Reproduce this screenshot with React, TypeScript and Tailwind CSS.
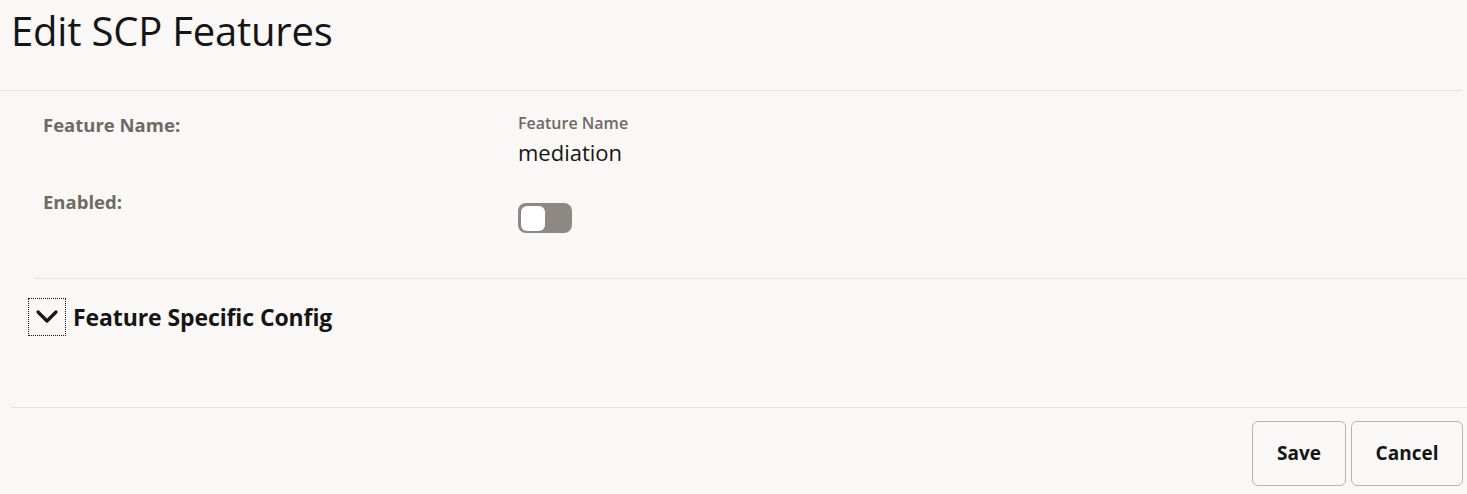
const font = { fontFamily: '"Open Sans", "Noto Sans", sans-serif' };

export default function App() {
  return (
    <div className="w-[1467px] h-[494px] bg-[#f9f8f6] text-[#161513] overflow-hidden" style={font}>
      {/* Header */}
      <div className="pr-[5px]">
        <div className="h-[91px] border-b border-[#e5e3e0] pl-[11px] pt-[4px]">
          <h1 className="text-[40px] leading-[54px] font-normal tracking-[-0.2px]">Edit SCP Features</h1>
        </div>
      </div>

      {/* Form */}
      <div className="pl-[34px]">
        <div className="border-b border-[#e5e3e0] h-[188px] pl-[9px] pt-[21px]">
          <div className="flex">
            <div className="w-[475px] text-[18.5px] leading-[26px] font-bold text-[#6f6964]">Feature Name:</div>
            <div>
              <div className="text-[16px] leading-[22px] font-semibold text-[#6f6964]">Feature Name</div>
              <div className="text-[22px] leading-[30px] mt-[3px]">mediation</div>
            </div>
          </div>
          <div className="flex mt-[22px]">
            <div className="w-[475px] text-[18.5px] leading-[26px] font-bold text-[#6f6964]">Enabled:</div>
            <div className="pt-[14px]">
              <div className="w-[54px] h-[30px] rounded-[8px] bg-[#8e8882] p-[3px] flex items-center">
                <div className="w-[24px] h-[25px] rounded-[6px] bg-white" />
              </div>
            </div>
          </div>
        </div>
      </div>

      {/* Collapsible */}
      <div className="pl-[10px]">
        <div className="h-[129px] border-b border-[#e5e3e0] pl-[18px] pt-[19px]">
          <div className="flex items-center gap-[7px]">
            <button className="w-[38px] h-[38px] border border-dotted border-[#161513] flex items-center justify-center">
              <svg width="24" height="16" viewBox="0 0 24 16" fill="none">
                <polyline points="3,3 12,12 21,3" stroke="#161513" strokeWidth="3.2" strokeLinecap="round" strokeLinejoin="round" />
              </svg>
            </button>
            <span className="text-[23px] leading-[30px] font-bold tracking-[-0.1px]">Feature Specific Config</span>
          </div>
        </div>
      </div>

      {/* Footer */}
      <div className="flex justify-end gap-[5px] pr-[4px] pt-[13px]">
        <button className="w-[94px] h-[65px] rounded-[6px] border border-[#b7b4b0] text-[19px] font-bold">Save</button>
        <button className="w-[112px] h-[65px] rounded-[6px] border border-[#b7b4b0] text-[19px] font-bold">Cancel</button>
      </div>
    </div>
  );
}
